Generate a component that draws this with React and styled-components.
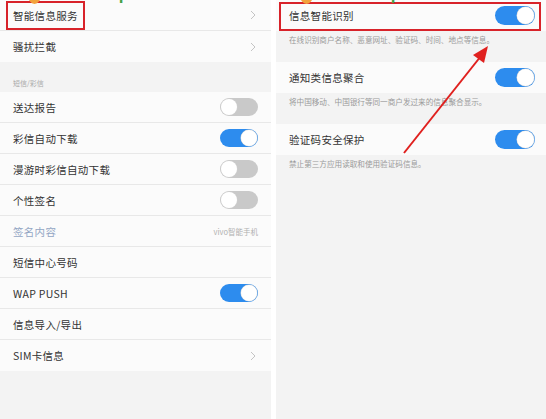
import styled, { createGlobalStyle } from "styled-components";

const GlobalStyle = createGlobalStyle`
  html, body {
    margin: 0;
    padding: 0;
    background: #ffffff;
  }
  body {
    font-family: "Noto Sans CJK SC", "Noto Sans", "Liberation Sans", sans-serif;
  }
`;

const Page = styled.div`
  display: flex;
  gap: 5px;
  width: 546px;
  height: 419px;
  overflow: hidden;
  background: #fff;
`;

const Panel = styled.div`
  position: relative;
  width: ${(p) => p.$width}px;
  height: 419px;
  background: #f3f3f3;
  display: flex;
  flex-direction: column;
  overflow: hidden;
`;

const Watermark = styled.div`
  position: absolute;
  top: -15px;
  left: ${(p) => p.$left}px;
  display: flex;
  align-items: center;
  gap: 30px;
  pointer-events: none;
  span {
    font: bold 17px "Liberation Sans", sans-serif;
    color: #46a046;
    letter-spacing: 1px;
  }
  i {
    display: block;
    width: 13px;
    height: 18px;
    border-radius: 50%;
    background: #f2a23c;
  }
`;

const Row = styled.div`
  position: relative;
  height: 31px;
  box-sizing: border-box;
  padding: 0 ${(p) => p.$pr || 13}px 0 13px;
  background: #fbfbfb;
  border-bottom: ${(p) => (p.$last ? "none" : "1px solid #e8e8e8")};
  display: flex;
  align-items: center;
  justify-content: space-between;
  flex-shrink: 0;
  &::after {
    content: "";
    display: ${(p) => (p.$boxed ? "block" : "none")};
    position: absolute;
    top: 2px;
    left: 3px;
    right: 5px;
    bottom: 0;
    border: 2px solid #d8232a;
  }
`;

const Label = styled.span`
  font-size: 10.5px;
  color: ${(p) => (p.$muted ? "#93a6c4" : "#333")};
  letter-spacing: 0.3px;
  white-space: nowrap;
`;

const Boxed = styled.span`
  margin: 0 -7px;
  padding: 5px;
  border: 2px solid #d8232a;
  line-height: 13px;
`;

const SideText = styled.span`
  font-size: 7.5px;
  color: #b0b0b0;
`;

const Chevron = styled.svg`
  width: 6px;
  height: 10px;
  margin-right: 2px;
`;

const SectionHeader = styled.div`
  height: 30px;
  box-sizing: border-box;
  padding: 0 13px 4px;
  display: flex;
  align-items: flex-end;
  font-size: 7px;
  color: #a8a8a8;
  flex-shrink: 0;
`;

const Desc = styled.div`
  height: 31px;
  box-sizing: border-box;
  padding: 3px 13px 0;
  font-size: 7.6px;
  color: #9a9a9a;
  white-space: nowrap;
  flex-shrink: 0;
`;

const Track = styled.div`
  width: ${(p) => p.$w}px;
  height: ${(p) => p.$h}px;
  border-radius: ${(p) => p.$h / 2}px;
  background: ${(p) => (p.$on ? "#2d8cee" : "#c9c9c9")};
  display: flex;
  align-items: center;
  justify-content: ${(p) => (p.$on ? "flex-end" : "flex-start")};
  padding: 1px;
  box-sizing: border-box;
`;

const Knob = styled.div`
  width: ${(p) => p.$h - 2}px;
  height: ${(p) => p.$h - 2}px;
  border-radius: 50%;
  background: #fff;
  box-shadow: 0 0 0 0.5px #d0d0d0;
`;

const Toggle = ({ on, w = 38, h = 18 }) => (
  <Track $on={on} $w={w} $h={h}>
    <Knob $h={h} />
  </Track>
);

const ArrowSvg = styled.svg`
  position: absolute;
  top: 0;
  left: 0;
  pointer-events: none;
`;

const Arrow = () => (
  <ArrowSvg viewBox="0 0 270 419" width="270" height="419">
    <line x1="128" y1="153" x2="205" y2="56" stroke="#e0201e" strokeWidth="2" />
    <polygon points="212,46 197,55 208,63" fill="#e0201e" />
  </ArrowSvg>
);

const ChevronIcon = () => (
  <Chevron viewBox="0 0 6 10">
    <path d="M1 1 L5 5 L1 9" fill="none" stroke="#c4c4c4" strokeWidth="1" />
  </Chevron>
);

export default function App() {
  return (
    <>
      <GlobalStyle />
      <Page>
        <Panel $width={271}>
          <Row>
            <Label>
              <Boxed>智能信息服务</Boxed>
            </Label>
            <ChevronIcon />
          </Row>
          <Row $last>
            <Label>骚扰拦截</Label>
            <ChevronIcon />
          </Row>
          <SectionHeader>短信/彩信</SectionHeader>
          <Row>
            <Label>送达报告</Label>
            <Toggle on={false} />
          </Row>
          <Row>
            <Label>彩信自动下载</Label>
            <Toggle on />
          </Row>
          <Row>
            <Label>漫游时彩信自动下载</Label>
            <Toggle on={false} />
          </Row>
          <Row>
            <Label>个性签名</Label>
            <Toggle on={false} />
          </Row>
          <Row>
            <Label $muted>签名内容</Label>
            <SideText>vivo智能手机</SideText>
          </Row>
          <Row>
            <Label>短信中心号码</Label>
          </Row>
          <Row>
            <Label>WAP PUSH</Label>
            <Toggle on />
          </Row>
          <Row>
            <Label>信息导入/导出</Label>
          </Row>
          <Row $last>
            <Label>SIM卡信息</Label>
            <ChevronIcon />
          </Row>
          <Watermark $left={28}>
            <i />
            <span>www.pc0359.cn</span>
          </Watermark>
        </Panel>
        <Panel $width={270}>
          <Row $boxed $pr={11} $last>
            <Label>信息智能识别</Label>
            <Toggle on w={40} h={19} />
          </Row>
          <Desc>在线识别商户名称、恶意网址、验证码、时间、地点等信息。</Desc>
          <Row $pr={11} $last>
            <Label>通知类信息聚合</Label>
            <Toggle on w={40} h={19} />
          </Row>
          <Desc>将中国移动、中国银行等同一商户发过来的信息聚合显示。</Desc>
          <Row $pr={11} $last>
            <Label>验证码安全保护</Label>
            <Toggle on w={40} h={19} />
          </Row>
          <Desc>禁止第三方应用读取和使用验证码信息。</Desc>
          <Watermark $left={24}>
            <i />
            <span>www.pc0359.cn</span>
          </Watermark>
          <Arrow />
        </Panel>
      </Page>
    </>
  );
}
